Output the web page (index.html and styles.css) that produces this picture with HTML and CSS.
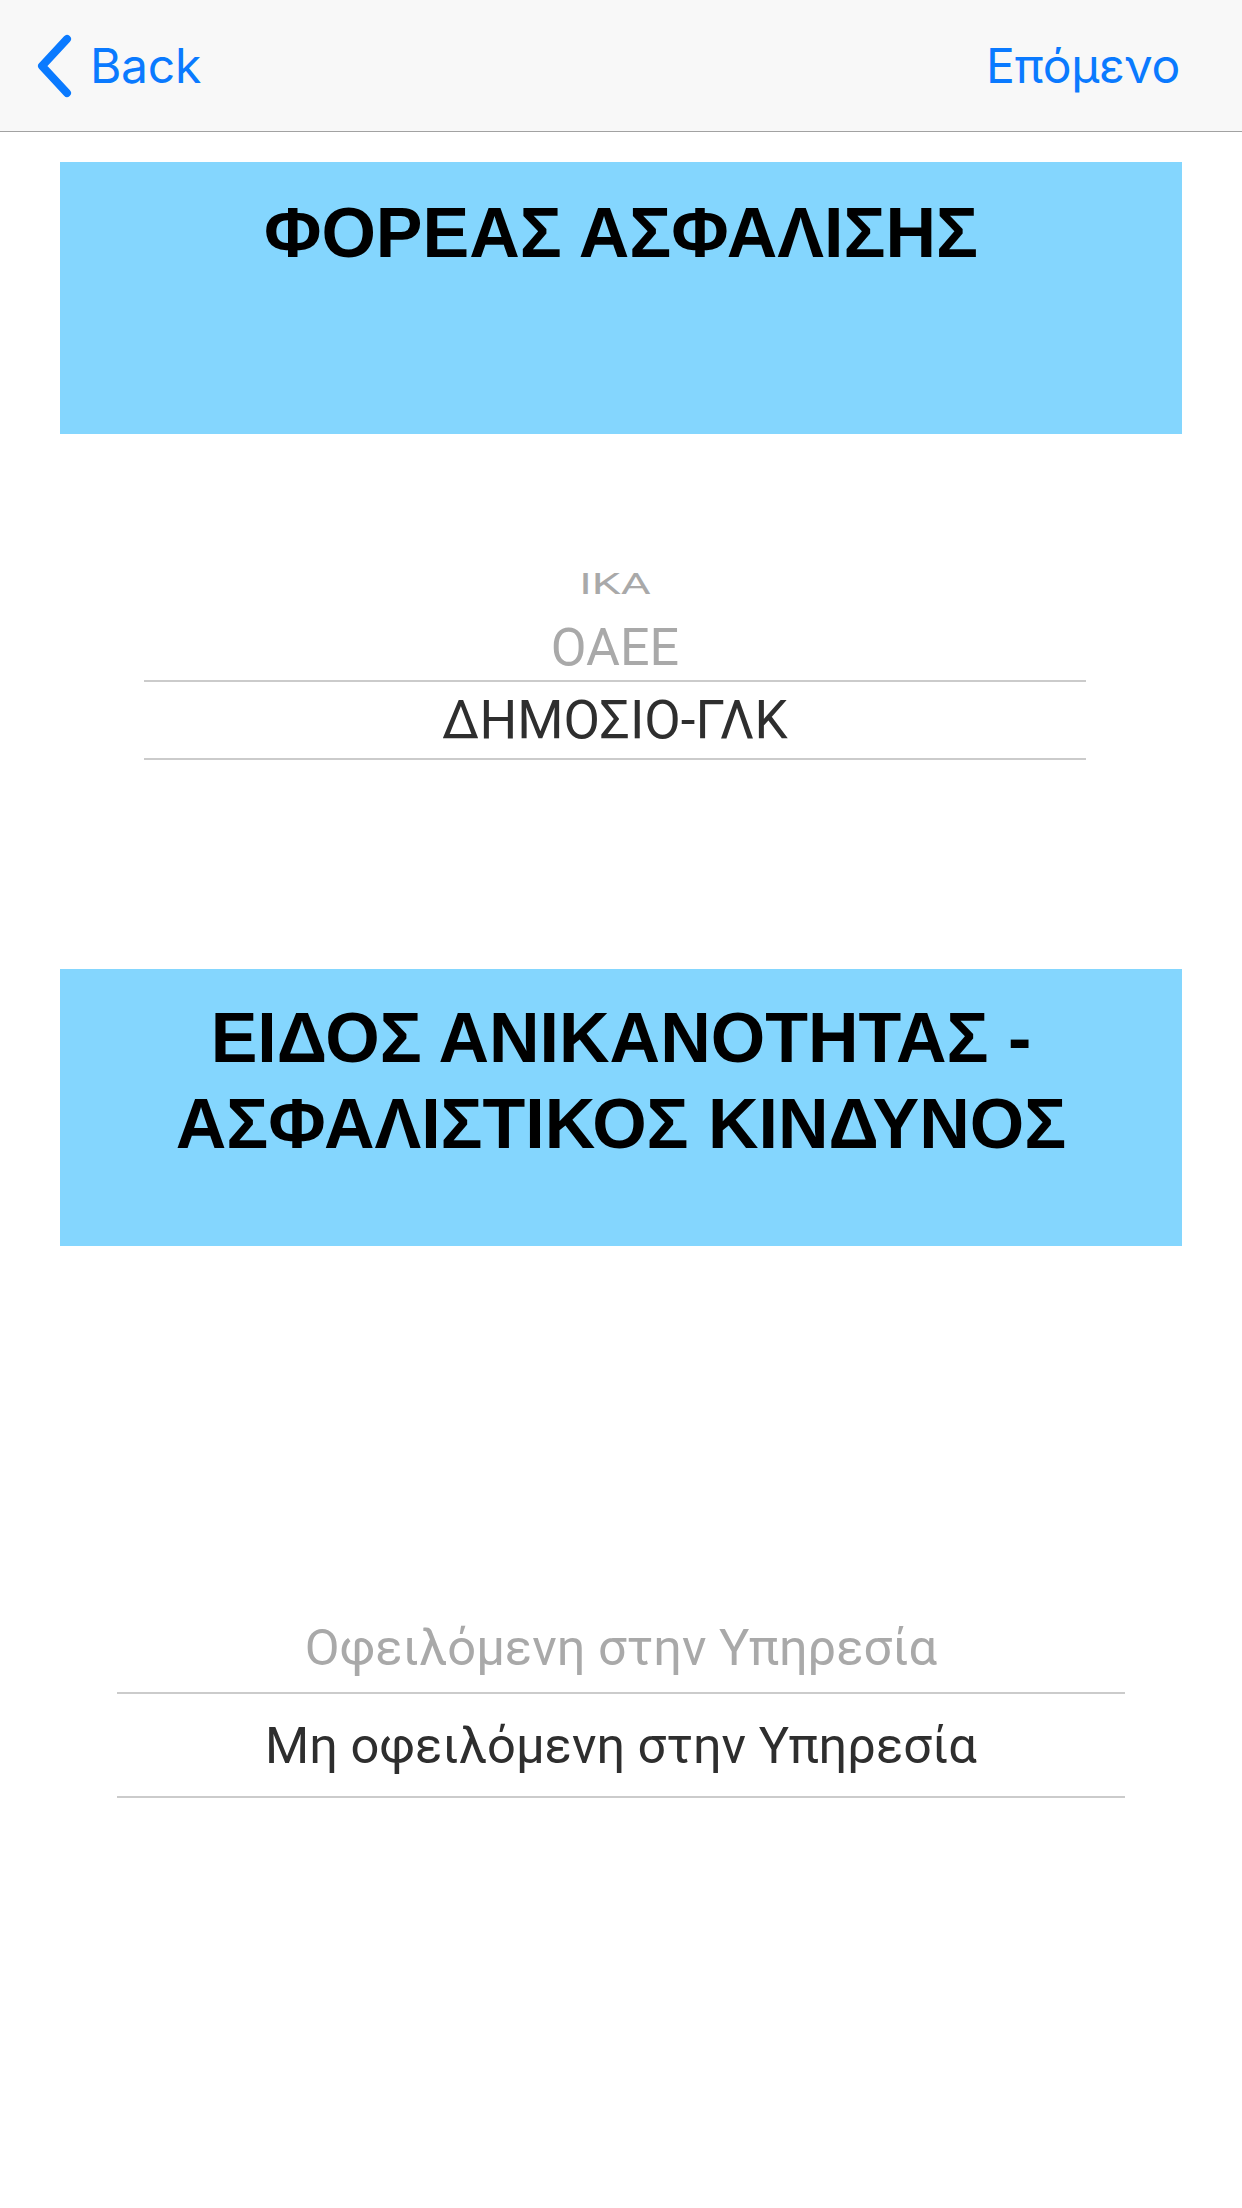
FILE: index.html
```html
<!DOCTYPE html>
<html lang="el">
<head>
<meta charset="utf-8">
<title>Φορέας Ασφάλισης</title>
<link rel="stylesheet" href="styles.css">
</head>
<body>
<header class="nav">
  <div class="nav-back">
    <svg class="chevron" width="44" height="66" viewBox="0 0 44 66">
      <path d="M31 5 L6 32 L31 59" fill="none" stroke="#0a7aff" stroke-width="8" stroke-linecap="round" stroke-linejoin="round"/>
    </svg>
    <span class="nav-text">Back</span>
  </div>
  <span class="nav-text nav-next">Επόμενο</span>
</header>
<main class="page">
  <section class="band band-one">
    <h2 class="band-title">ΦΟΡΕΑΣ ΑΣΦΑΛΙΣΗΣ</h2>
  </section>
  <div class="picker picker-one">
    <div class="pick-row row-far"><span class="squash">ΙΚΑ</span></div>
    <div class="pick-row row-near">ΟΑΕΕ</div>
    <div class="pick-row row-selected">ΔΗΜΟΣΙΟ-ΓΛΚ</div>
  </div>
  <section class="band band-two">
    <h2 class="band-title">ΕΙΔΟΣ ΑΝΙΚΑΝΟΤΗΤΑΣ -<br>ΑΣΦΑΛΙΣΤΙΚΟΣ ΚΙΝΔΥΝΟΣ</h2>
  </section>
  <div class="picker picker-two">
    <div class="pick-row row-near2">Οφειλόμενη στην Υπηρεσία</div>
    <div class="pick-row row-selected2">Μη οφειλόμενη στην Υπηρεσία</div>
  </div>
</main>
</body>
</html>
```
FILE: styles.css
```css
html, body {
  margin: 0;
  padding: 0;
  background: #ffffff;
}
body {
  width: 1242px;
  min-height: 2208px;
  font-family: Roboto, "Noto Sans", sans-serif;
}
.nav {
  height: 131px;
  background: #f8f8f8;
  border-bottom: 1px solid #a2a2a2;
  display: flex;
  align-items: center;
  justify-content: space-between;
  padding: 0 62px 0 36px;
}
.nav-back {
  display: flex;
  align-items: center;
  gap: 10px;
}
.chevron {
  display: block;
  margin-top: 2px;
}
.nav-text {
  font-family: Inter, "Noto Sans", sans-serif;
  font-size: 48px;
  color: #0a7aff;
  letter-spacing: -0.3px;
}
.page {
  display: flex;
  flex-direction: column;
}
.band {
  margin: 0 60px;
  background: #84d6fe;
  box-sizing: border-box;
}
.band-one {
  margin-top: 30px;
  height: 272px;
  padding-top: 28px;
}
.band-two {
  margin-top: 209px;
  height: 277px;
  padding-top: 26px;
}
.band-title {
  margin: 0;
  text-align: center;
  font-family: "Liberation Sans", Arial, sans-serif;
  font-weight: 700;
  font-size: 70px;
  line-height: 86px;
  color: #000000;
}
.picker {
  display: flex;
  flex-direction: column;
}
.picker-one {
  margin-left: 144px;
  width: 942px;
  margin-top: 122px;
}
.picker-two {
  margin-left: 117px;
  width: 1008px;
  margin-top: 366px;
}
.pick-row {
  display: flex;
  align-items: center;
  justify-content: center;
  color: #a9a9a9;
}
.row-far {
  height: 54px;
  font-size: 46px;
}
.squash {
  display: inline-block;
  transform: scaleY(0.66);
}
.row-near {
  height: 70px;
  font-size: 52px;
  padding-top: 4px;
  box-sizing: border-box;
}
.row-selected {
  height: 80px;
  box-sizing: border-box;
  border-top: 2px solid #cbcbcb;
  border-bottom: 2px solid #cbcbcb;
  font-size: 53px;
  color: #2e2e2e;
}
.row-near2 {
  height: 70px;
  margin-bottom: 10px;
  font-size: 50.6px;
}
.row-selected2 {
  height: 106px;
  box-sizing: border-box;
  border-top: 2px solid #cbcbcb;
  border-bottom: 2px solid #cbcbcb;
  font-size: 50.6px;
  color: #2e2e2e;
}
```
